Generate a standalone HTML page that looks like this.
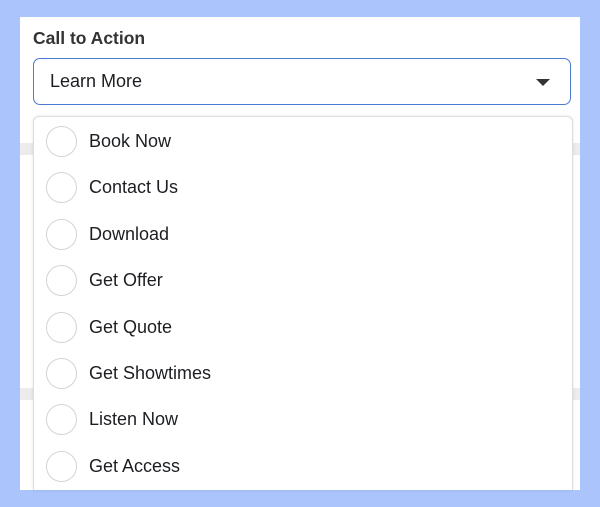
<!DOCTYPE html>
<html><head><style>
body{margin:0;width:600px;height:507px;background:#abc4fb;position:relative;overflow:hidden;font-family:"Liberation Sans",Arial,sans-serif;}
.panel{position:absolute;left:20px;top:17px;width:560px;height:473px;background:#fff;}
.bar{position:absolute;height:12px;background:#ececec;}
.label{position:absolute;left:33px;top:28px;font-size:17.5px;font-weight:bold;color:#333;}
.sel{position:absolute;left:33px;top:58px;width:536px;height:45px;border:1.5px solid #4a7bd0;border-radius:7px;background:#fff;}
.sel span{position:absolute;left:16px;top:12px;font-size:18px;color:#1c1e21;}
.arrow{position:absolute;right:20px;top:20px;width:0;height:0;border-left:7px solid transparent;border-right:7px solid transparent;border-top:7px solid #333;}
.list{position:absolute;left:33px;top:116px;width:538px;height:373px;background:#fff;border:1px solid #ddd;border-bottom:none;border-radius:6px 6px 0 0;box-shadow:0 0 3px rgba(0,0,0,.1);}
.item{position:absolute;left:0;height:46px;width:100%;}
.item i{position:absolute;left:12px;top:7px;width:29px;height:29px;border:1.5px solid #d4d4d4;border-radius:50%;}
.item span{position:absolute;left:55px;top:12px;font-size:18px;color:#1c1e21;}
</style></head><body>
<div class="panel"></div>
<div class="bar" style="left:20px;top:143px;width:14px"></div>
<div class="bar" style="left:571px;top:143px;width:9px"></div>
<div class="bar" style="left:20px;top:388px;width:14px"></div>
<div class="bar" style="left:571px;top:388px;width:9px"></div>
<div class="label">Call to Action</div>
<div class="sel"><span>Learn More</span><div class="arrow"></div></div>
<div class="list">
<div class="item" style="top:2px"><i></i><span>Book Now</span></div>
<div class="item" style="top:48px"><i></i><span>Contact Us</span></div>
<div class="item" style="top:95px"><i></i><span>Download</span></div>
<div class="item" style="top:141px"><i></i><span>Get Offer</span></div>
<div class="item" style="top:188px"><i></i><span>Get Quote</span></div>
<div class="item" style="top:234px"><i></i><span>Get Showtimes</span></div>
<div class="item" style="top:280px"><i></i><span>Listen Now</span></div>
<div class="item" style="top:327px"><i></i><span>Get Access</span></div>
</div>
</body></html>
